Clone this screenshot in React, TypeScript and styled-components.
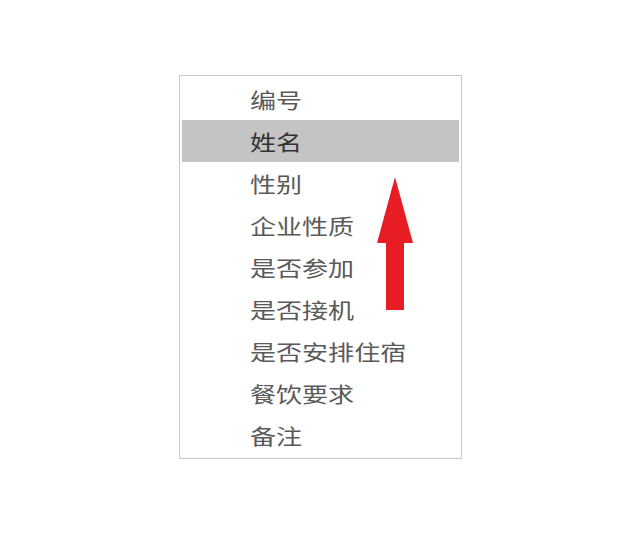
import React from "react";
import styled, { createGlobalStyle } from "styled-components";

const Global = createGlobalStyle`
  html, body { margin: 0; padding: 0; background: #fff; }
  body { font-family: "Noto Sans CJK SC", "Liberation Sans", sans-serif; }
`;

const Page = styled.div`
  width: 640px;
  height: 540px;
  display: flex;
  justify-content: center;
  align-items: flex-start;
  padding-top: 75px;
  box-sizing: border-box;
`;

const ListBox = styled.div`
  position: relative;
  width: 283px;
  box-sizing: border-box;
  border: 1px solid #c8c8c8;
  padding: 2px 2px 2px 2px;
  display: flex;
  flex-direction: column;
`;

const Row = styled.div<{ $active?: boolean }>`
  height: 42px;
  display: flex;
  align-items: center;
  padding-left: 68px;
  background: ${(p) => (p.$active ? "#c4c4c4" : "transparent")};
  color: ${(p) => (p.$active ? "#333" : "#5a5a5a")};
`;

const Label = styled.span`
  display: inline-block;
  font-size: 21px;
  line-height: 1;
  transform: scaleX(1.24);
  transform-origin: left center;
  white-space: nowrap;
`;

const Arrow = styled.svg`
  position: absolute;
  left: 197px;
  top: 101px;
`;

const items = ["编号", "姓名", "性别", "企业性质", "是否参加", "是否接机", "是否安排住宿", "餐饮要求", "备注"];

export default function App() {
  return (
    <>
      <Global />
      <Page>
        <ListBox>
          {items.map((t, i) => (
            <Row key={t} $active={i === 1}>
              <Label>{t}</Label>
            </Row>
          ))}
          <Arrow width="38" height="134" viewBox="0 0 38 134">
            <polygon points="18,0 36,66 27,66 27,133 9,133 9,66 0,66" fill="#e81c24" />
          </Arrow>
        </ListBox>
      </Page>
    </>
  );
}
